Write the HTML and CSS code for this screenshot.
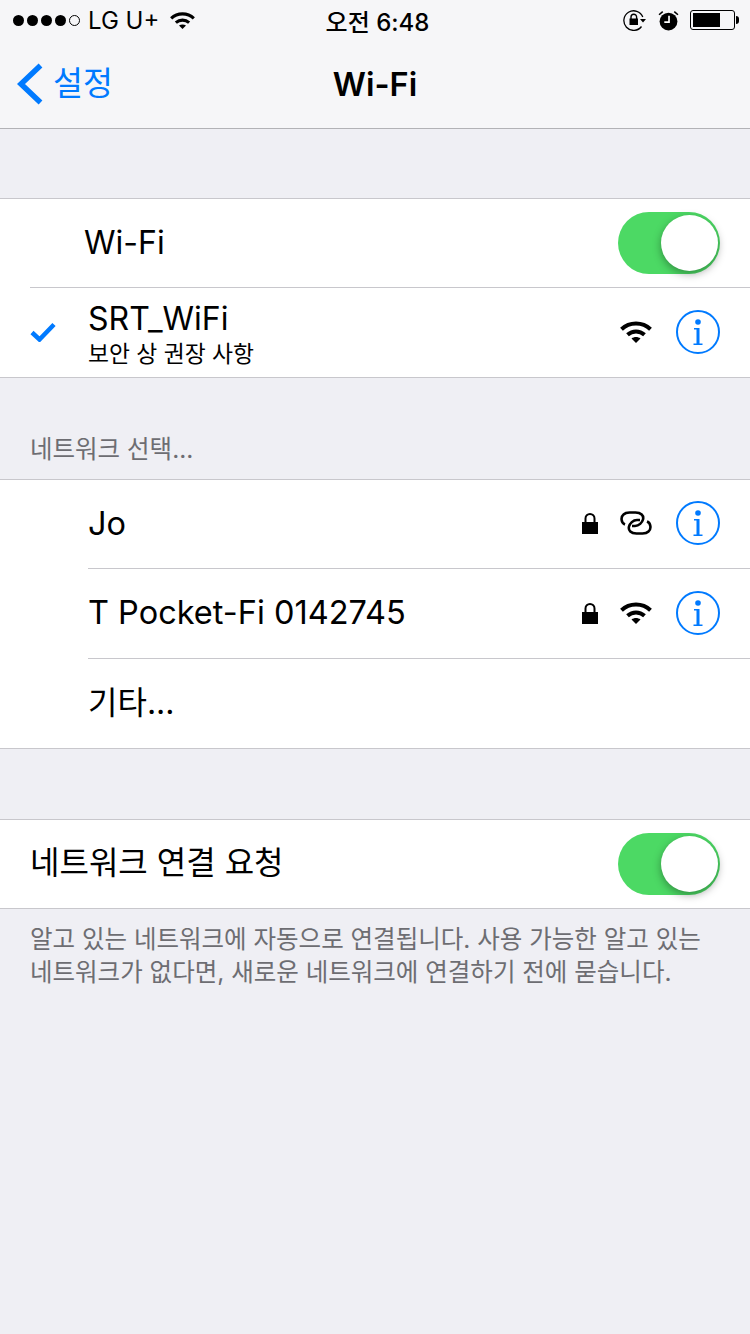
FILE: index.html
```html
<!DOCTYPE html>
<html lang="ko">
<head>
    <meta charset="UTF-8">
    <title>Wi-Fi</title>
    <link rel="stylesheet" href="styles.css">
</head>
<body>
    <svg class="icon-defs" width="0" height="0">
        <symbol id="wifi" viewBox="0 0 32 24">
            <path d="M1.5 9.2C9.5 1.6 22.5 1.600 30.5 9.2" fill="none" stroke="#000" stroke-width="4"/>
            <path d="M7.5 14.8C12.500 10.400 19.500 10.400 24.500 14.800" fill="none" stroke="#000" stroke-width="4"/>
            <path d="M11.500 18.500C14.200 16.500 17.800 16.500 20.500 18.500L16 23Z" fill="#000"/>
        </symbol>
        <symbol id="info" viewBox="0 0 44 44">
            <circle cx="22" cy="22" r="21" fill="none" stroke="#007aff" stroke-width="2"/>
            <circle cx="22" cy="12" r="2.800" fill="#007aff"/>
            <path d="M18 18h5.500v15.500h3v1.500h-9v-1.500h3V19.500H18Z" fill="#007aff"/>
        </symbol>
        <symbol id="lock" viewBox="0 0 16 22">
            <path d="M3.500 10V6.500a4.500 4.500 0 0 1 9 0V10" fill="none" stroke="#000" stroke-width="2"/>
            <rect y="10" width="16" height="12" fill="#000"/>
        </symbol>
        <symbol id="link" viewBox="0 0 32 24">
            <g fill="none" stroke="#000" stroke-width="2.600">
                <path d="M5 13.500C1 12 .5 6 3.500 3.500 5 2 7 1.500 9.500 1.500h6c5.500 0 8.500 3 7.500 7-.8 3-4 6.500-8 6.500h-3"/>
                <path d="M27 10.500c4 1.500 4.500 7.500 1.500 10-1.500 1.500-3.500 2-6 2h-6c-5.500 0-8.500-3-7.500-7 .8-3 4-6.500 8-6.500h3"/>
            </g>
        </symbol>
    </svg>

    <header class="top-bar">
        <div class="status-bar">
            <div class="status-left">
                <span class="signal">
                    <i class="dot"></i><i class="dot"></i><i class="dot"></i><i class="dot"></i><i class="dot empty"></i>
                </span>
                <span class="carrier">LG U+</span>
                <svg class="status-wifi"><use href="#wifi"/></svg>
            </div>
            <div class="status-time">오전 6:48</div>
            <div class="status-right">
                <svg class="rotation-lock" viewBox="0 0 24 22">
                    <path d="M18.500 17.500A9.800 9.800 0 1 1 19.800 8" fill="none" stroke="#000" stroke-width="1.300"/>
                    <path d="M17 10h6l-3 3.500Z" fill="#000"/>
                    <path d="M8 10V8a2.800 2.800 0 0 1 5.600 0v2" fill="none" stroke="#000" stroke-width="1.400"/>
                    <rect x="6.500" y="9.500" width="8.500" height="6.500" fill="#000"/>
                </svg>
                <svg class="alarm" viewBox="0 0 20 20">
                    <circle cx="10" cy="11" r="8.500" fill="#000"/>
                    <path d="M1 4.500 4.500 1.500M19 4.500 15.500 1.500" stroke="#000" stroke-width="1.500"/>
                    <path d="M10.500 5.500v6H6" fill="none" stroke="#fff" stroke-width="1.600"/>
                </svg>
                <div class="battery"><div class="battery-level"></div></div>
                <div class="battery-tip"></div>
            </div>
        </div>
        <nav class="nav-bar">
            <a class="back">
                <svg class="back-chevron" viewBox="0 0 26 42">
                    <path d="M23.500 2.500 4 21l19.500 18.500" fill="none" stroke="#007aff" stroke-width="5.500"/>
                </svg>
                <span>설정</span>
            </a>
            <h1 class="nav-title">Wi-Fi</h1>
        </nav>
    </header>

    <section class="group group-first">
        <div class="row row-wifi">
            <span class="label">Wi-Fi</span>
            <div class="toggle"><div class="knob"></div></div>
        </div>
        <div class="row row-current">
            <svg class="check" viewBox="0 0 26 20">
                <path d="M2 10.500 9.500 17.500 24 2.500" fill="none" stroke="#007aff" stroke-width="4.500"/>
            </svg>
            <div class="network-name">
                <span class="label">SRT_WiFi</span>
                <span class="sub-label">보안 상 권장 사항</span>
            </div>
            <div class="accessories">
                <svg class="signal-icon"><use href="#wifi"/></svg>
                <svg class="info-icon"><use href="#info"/></svg>
            </div>
        </div>
    </section>

    <h2 class="group-header">네트워크 선택...</h2>

    <section class="group">
        <div class="row row-network">
            <span class="label">Jo</span>
            <div class="accessories">
                <svg class="lock-icon"><use href="#lock"/></svg>
                <svg class="signal-icon"><use href="#link"/></svg>
                <svg class="info-icon"><use href="#info"/></svg>
            </div>
        </div>
        <div class="row row-network">
            <span class="label">T Pocket-Fi 0142745</span>
            <div class="accessories">
                <svg class="lock-icon"><use href="#lock"/></svg>
                <svg class="signal-icon"><use href="#wifi"/></svg>
                <svg class="info-icon"><use href="#info"/></svg>
            </div>
        </div>
        <div class="row row-network row-other">
            <span class="label">기타...</span>
        </div>
    </section>

    <section class="group group-ask">
        <div class="row row-ask">
            <span class="label">네트워크 연결 요청</span>
            <div class="toggle"><div class="knob"></div></div>
        </div>
    </section>

    <p class="group-footer">알고 있는 네트워크에 자동으로 연결됩니다. 사용 가능한 알고 있는 네트워크가 없다면, 새로운 네트워크에 연결하기 전에 묻습니다.</p>
</body>
</html>
```

FILE: styles.css
```css
body {
    font-family: Inter, "Noto Sans CJK KR", sans-serif;
    background-color: #efeff4;
    color: #000;
    margin: 0;
    height: 1334px;
    overflow: hidden;
}

.icon-defs {
    display: block;
    height: 0;
}

/* top bar */
.top-bar {
    background-color: #f6f6f8;
    border-bottom: 1px solid #b2b2b6;
    height: 128px;
}

.status-bar {
    display: flex;
    align-items: center;
    justify-content: space-between;
    height: 40px;
    padding: 0 11px 0 13px;
    position: relative;
}

.status-left {
    display: flex;
    align-items: center;
}

.signal {
    display: flex;
    gap: 3px;
}

.dot {
    display: block;
    width: 11px;
    height: 11px;
    border-radius: 50%;
    background-color: #000;
}

.dot.empty {
    box-sizing: border-box;
    background: none;
    border: 1px solid #000;
}

.carrier {
    font-size: 24px;
    margin-left: 8px;
}

.status-wifi {
    width: 25px;
    height: 19px;
    margin-left: 11px;
}

.status-time {
    position: absolute;
    left: 0;
    right: 0;
    padding-left: 5px;
    text-align: center;
    font-size: 24px;
    font-weight: 500;
}

.status-right {
    display: flex;
    align-items: center;
}

.rotation-lock {
    width: 24px;
    height: 22px;
}

.alarm {
    width: 21px;
    height: 21px;
    margin-left: 11px;
}

.battery {
    box-sizing: border-box;
    width: 45px;
    height: 20px;
    margin-left: 11px;
    padding: 2px;
    border: 1px solid #000;
    border-radius: 3px;
}

.battery-level {
    width: 27px;
    height: 100%;
    background-color: #000;
}

.battery-tip {
    width: 3px;
    height: 8px;
    margin-left: 1px;
    background-color: #000;
    border-radius: 0 3px 3px 0;
}

.nav-bar {
    display: flex;
    align-items: center;
    justify-content: center;
    height: 88px;
    position: relative;
}

.back {
    position: absolute;
    left: 17px;
    top: 23px;
    display: flex;
    align-items: center;
    gap: 10px;
    color: #007aff;
    font-size: 32.500px;
    line-height: 42px;
}

.back-chevron {
    width: 26px;
    height: 42px;
}

.nav-title {
    margin: 0;
    font-size: 32.500px;
    font-weight: 600;
}

/* table groups */
.group {
    background-color: #fff;
    border-top: 1px solid #c8c7cc;
    border-bottom: 1px solid #c8c7cc;
}

.group-first {
    margin-top: 69px;
}

.group-ask {
    margin-top: 70px;
}

.group-header {
    margin: 0;
    padding: 56px 30px 15px;
    height: 30px;
    font-size: 24.500px;
    line-height: 30px;
    font-weight: 400;
    color: #6d6d72;
}

.group-footer {
    margin: 0;
    padding: 14px 30px 0;
    font-size: 24.500px;
    line-height: 32.500px;
    color: #6d6d72;
}

.row {
    box-sizing: border-box;
    display: flex;
    align-items: center;
    height: 89px;
    padding-right: 30px;
    position: relative;
    font-size: 32.500px;
}

.row + .row::before {
    content: "";
    position: absolute;
    top: -1px;
    left: 88px;
    right: 0;
    height: 1px;
    background-color: #c8c7cc;
}

.row-wifi {
    padding-left: 84px;
    justify-content: space-between;
    font-size: 32px;
}

.row-wifi .label {
    padding-bottom: 2px;
}

.row-wifi .toggle {
    margin-top: -2px;
}

.row-current {
    padding-left: 30px;
    font-size: 32px;
}

.row-current::before {
    left: 30px !important;
}

.row-current .accessories {
    margin-bottom: 1px;
}

.row-network {
    padding-left: 88px;
    padding-bottom: 3px;
}

.row-network + .row-network {
    height: 90px;
}

.row-network.row-other {
    height: 89px;
    font-size: 32px;
}

.row-other .label {
    padding-bottom: 5px;
}

.row-ask {
    height: 88px;
    padding-left: 30px;
    justify-content: space-between;
    font-size: 32px;
}

.row-ask .label {
    padding-bottom: 8px;
}

.check {
    width: 26px;
    height: 20px;
    margin-right: 32px;
    margin-top: -2px;
}

.network-name {
    display: flex;
    flex-direction: column;
    padding-top: 3px;
}

.network-name .label {
    line-height: 38px;
}

.sub-label {
    font-size: 22.800px;
    line-height: 31px;
}

.accessories {
    display: flex;
    align-items: center;
    margin-left: auto;
}

.lock-icon {
    width: 16px;
    height: 22px;
    margin-right: 22px;
}

.signal-icon {
    width: 32px;
    height: 24px;
    margin-right: 24px;
}

.info-icon {
    width: 44px;
    height: 44px;
}

/* switch */
.toggle {
    box-sizing: border-box;
    width: 102px;
    height: 62px;
    padding: 3px 2px 3px 43px;
    border-radius: 31px;
    background-color: #4cd964;
}

.knob {
    width: 57px;
    height: 56px;
    border-radius: 50%;
    background-color: #fff;
    box-shadow: 0 3px 8px rgba(0, 0, 0, 0.35);
}
```
